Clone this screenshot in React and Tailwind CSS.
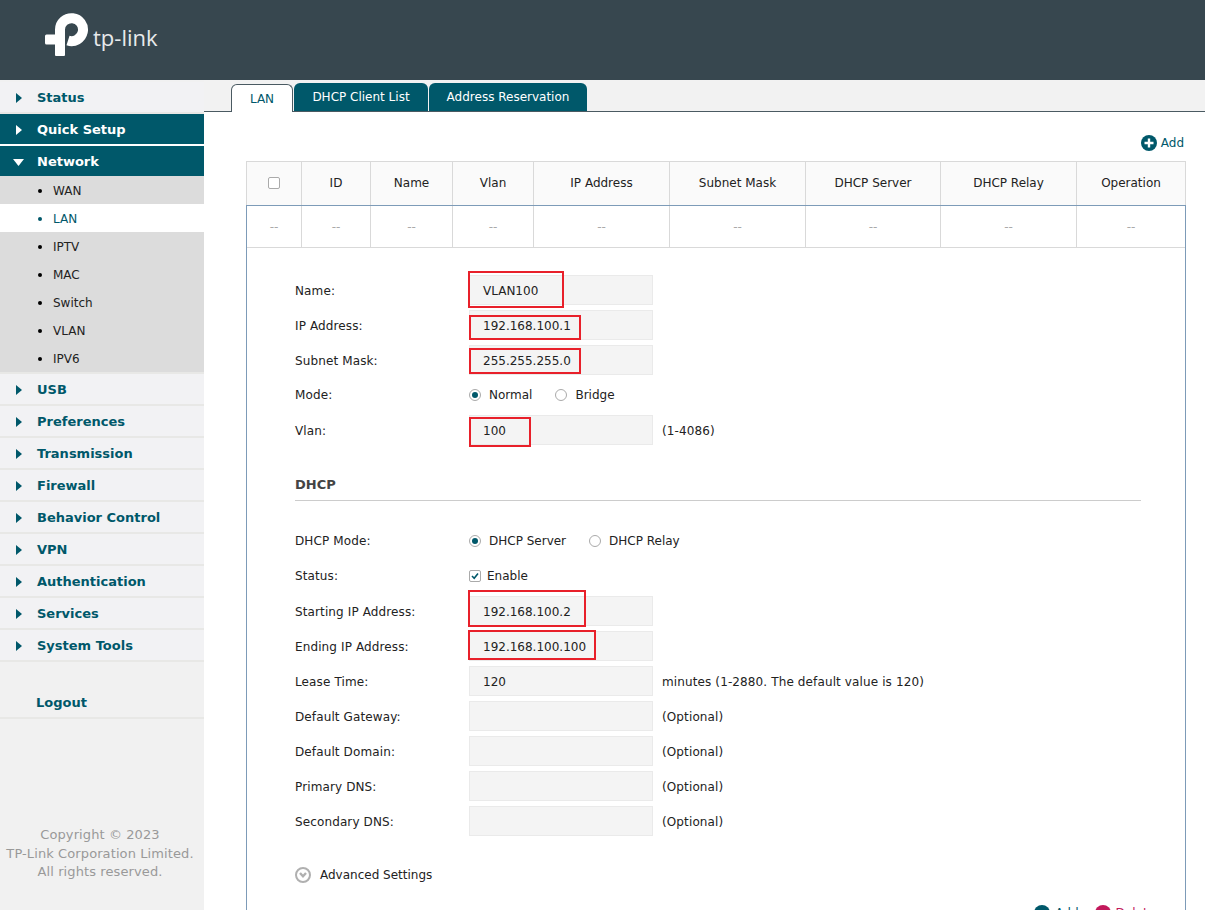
const menu = ['USB', 'Preferences', 'Transmission', 'Firewall', 'Behavior Control', 'VPN', 'Authentication', 'Services', 'System Tools']
const subMenu = ['WAN', 'LAN', 'IPTV', 'MAC', 'Switch', 'VLAN', 'IPV6']
const columns = [
    { name: 'ID', w: 'w-[69px]' },
    { name: 'Name', w: 'w-[82px]' },
    { name: 'Vlan', w: 'w-[81px]' },
    { name: 'IP Address', w: 'w-[136px]' },
    { name: 'Subnet Mask', w: 'w-[136px]' },
    { name: 'DHCP Server', w: 'w-[135px]' },
    { name: 'DHCP Relay', w: 'w-[136px]' },
    { name: 'Operation', w: 'flex-1' },
]

function Arrow({ white }) {
    return (
        <svg width="6" height="10" viewBox="0 0 6 10" className={`ml-4 mr-[15px] ${white ? 'fill-white' : 'fill-[#00586a]'}`}>
            <path d="M0 0 L6 5 L0 10 Z" />
        </svg>
    )
}

function MenuRow({ label }) {
    return (
        <div className="h-8 pt-0.5 flex items-center bg-[#f2f2f4] border-b-2 border-[#e8e8e6] text-[#00586a] font-bold text-[13px]">
            <Arrow />
            <span>{label}</span>
        </div>
    )
}

function Sidebar() {
    return (
        <aside className="w-[204px] shrink-0 bg-[#f1f1f1] flex flex-col pt-0.5">
            <MenuRow label="Status" />
            <div className="h-[30px] pt-0.5 flex items-center bg-[#00586a] text-white font-bold text-[13px]">
                <Arrow white />
                <span>Quick Setup</span>
            </div>
            <div className="h-0.5 bg-white" />
            <div className="h-[30px] pt-0.5 flex items-center bg-[#00586a] text-white font-bold text-[13px]">
                <svg width="11" height="7" viewBox="0 0 11 7" className="ml-[13px] mr-[13px] fill-white">
                    <path d="M0 0 H11 L5.5 7 Z" />
                </svg>
                <span>Network</span>
            </div>
            <div className="bg-[#dcdcdc] border-b-2 border-[#e8e8e6]">
                {subMenu.map((item) => (
                    <div
                        key={item}
                        className={`h-7 pt-0.5 flex items-center text-xs ${item === 'LAN' ? 'bg-white text-[#00586a]' : 'text-[#222]'}`}
                    >
                        <span className={`ml-[38px] mr-[11px] w-1 h-1 rounded-full ${item === 'LAN' ? 'bg-[#00586a]' : 'bg-black'}`} />
                        {item}
                    </div>
                ))}
            </div>
            {menu.map((item) => (
                <MenuRow key={item} label={item} />
            ))}
            <div className="mt-[25px] h-[32px] pt-0.5 flex items-center pl-[36px] border-b-2 border-[#e8e8e6] text-[#00586a] font-bold text-[13px]">
                Logout
            </div>
            <div className="mt-[107px] pr-1 text-center text-[#999] text-[13px] leading-[18.5px] tracking-[0.1px]">
                <div>Copyright © 2023</div>
                <div>TP-Link Corporation Limited.</div>
                <div>All rights reserved.</div>
            </div>
        </aside>
    )
}

function Field({ label, value, hint, mark }) {
    return (
        <div className="h-[35px] pt-0.5 pb-[3px] flex items-center">
            <div className="w-[174px] pt-0.5 text-[#222] tracking-[0.12px]">{label}</div>
            <div className="relative w-[184px] h-[30px] pt-0.5 bg-[#f4f4f4] border border-[#eaeaea] pl-[13px] flex items-center text-[#222]">
                {value}
                {mark}
            </div>
            {hint && <div className="ml-[9px] pt-0.5 text-[#222] tracking-[0.12px]">{hint}</div>}
        </div>
    )
}

function Radio({ label, checked, gap }) {
    return (
        <label className={`flex items-center ${gap}`}>
            <span className="w-3 h-3 rounded-full border border-[#aaa] flex items-center justify-center mr-2 bg-white">
                {checked && <span className="w-1.5 h-1.5 rounded-full bg-[#00586a]" />}
            </span>
            {label}
        </label>
    )
}

function Row({ label, children, className = 'pt-0.5 pb-[3px]' }) {
    return (
        <div className={`h-[35px] flex items-center text-[#222] ${className}`}>
            <div className="w-[174px] tracking-[0.12px]">{label}</div>
            {children}
        </div>
    )
}

export default function App() {
    return (
        <div className="h-[910px] overflow-hidden flex flex-col bg-white font-['DejaVu_Sans',sans-serif] text-xs">
            {/* Header */}
            <header className="h-20 shrink-0 bg-[#37474f] flex items-start">
                <svg width="44" height="44" viewBox="45 13 44 44" className="ml-[45px] mt-[13px] fill-white stroke-white">
                    <path d="M45 36 Q45 34.5 46.5 34.5 H65 V55 Q65 56 64 56 H56 Q55 56 55 55 V44.5 H46.5 Q45 44.5 45 43 Z" stroke="none" />
                    <path d="M60 36 V29.5 A11.5 11.5 0 1 1 68 40.6" fill="none" strokeWidth="10" />
                </svg>
                <span className="ml-[4px] mt-[20px] text-[22px] leading-[34px] text-[#e8eaeb] font-['Open_Sans',sans-serif]">tp-link</span>
            </header>

            <div className="flex flex-1 min-h-0">
                <Sidebar />

                <main className="flex-1 min-w-0">
                    {/* Tabs */}
                    <div className="h-8 bg-[#f2f2f2] border-b border-[#4a5a62] flex items-end pl-[27px]">
                        <div className="w-[62px] h-7 -mb-px bg-white border border-b-0 border-[#4a5a62] rounded-t-md flex items-center justify-center text-[#00586a]">LAN</div>
                        <div className="ml-px w-[134px] h-7 bg-[#00586a] rounded-t-md flex items-center justify-center text-white">DHCP Client List</div>
                        <div className="ml-px w-[158px] h-7 bg-[#00586a] rounded-t-md flex items-center justify-center text-white">Address Reservation</div>
                    </div>

                    <div className="pl-[42px] pr-[19px]">
                        <div className="h-[49px] flex items-center justify-end pt-[12px] pr-0.5 text-[#00586a]">
                            <svg width="16" height="16" viewBox="0 0 16 16" className="mr-[4px]">
                                <circle cx="8" cy="8" r="8" fill="#00586a" />
                                <path d="M8 3.5 V12.5 M3.5 8 H12.5" stroke="#fff" strokeWidth="2.4" />
                            </svg>
                            Add
                        </div>

                        {/* Table */}
                        <div className="flex h-[44px] bg-[#fafafa] border border-[#d9d9d9] border-b-0 text-[#222]">
                            <div className="w-[54px] flex items-center justify-center pb-0.5">
                                <span className="w-3 h-3 rounded-[2px] border border-[#aaa] bg-white" />
                            </div>
                            {columns.map((c) => (
                                <div key={c.name} className={`${c.w} border-l border-[#d9d9d9] flex items-center justify-center pb-0.5`}>{c.name}</div>
                            ))}
                        </div>
                        <div className="border border-t-[#7d9bb8] border-x-[#7d9bb8] border-b-0">
                            <div className="flex h-[42px] border-b border-[#d9d9d9] text-[#aaa]">
                                <div className="w-[54px] flex items-center justify-center pt-px">--</div>
                                {columns.map((c) => (
                                    <div key={c.name} className={`${c.w} border-l border-[#d9d9d9] flex items-center justify-center pt-px`}>--</div>
                                ))}
                            </div>

                            {/* Form */}
                            <div className="pl-[48px] pr-[44px] pt-[25px] pb-10">
                                <Field label="Name:" value="VLAN100" mark={<span className="absolute -left-[2px] -top-[5px] w-[96px] h-[37px] border-2 border-[#e8202a]" />} />
                                <Field label="IP Address:" value="192.168.100.1" mark={<span className="absolute -left-px top-[4px] w-[112px] h-[25px] border-2 border-[#e8202a]" />} />
                                <Field label="Subnet Mask:" value="255.255.255.0" mark={<span className="absolute -left-px top-[2px] w-[112px] h-[26px] border-2 border-[#e8202a]" />} />
                                <Row label="Mode:">
                                    <Radio label="Normal" checked gap="mr-[23px]" />
                                    <Radio label="Bridge" />
                                </Row>
                                <Field label="Vlan:" value="100" hint="(1-4086)" mark={<span className="absolute -left-px top-px w-[62px] h-[30px] border-2 border-[#e8202a]" />} />

                                <div className="mt-[27px] pb-[6px] border-b border-[#ccc] font-bold text-[13px] text-[#444] leading-[19px]">DHCP</div>
                                <div className="h-[22px]" />

                                <Row label="DHCP Mode:" className="pt-[3px] pb-0.5">
                                    <Radio label="DHCP Server" checked gap="mr-[23px]" />
                                    <Radio label="DHCP Relay" />
                                </Row>
                                <Row label="Status:" className="pt-[3px] pb-0.5 mb-px">
                                    <span className="w-3 h-3 rounded-[2px] border border-[#aaa] mr-[6px] flex items-center justify-center">
                                        <svg width="8" height="8" viewBox="0 0 8 8"><path d="M1 4 L3.2 6.2 L7 1.5" fill="none" stroke="#00586a" strokeWidth="1.6" /></svg>
                                    </span>
                                    Enable
                                </Row>
                                <Field label="Starting IP Address:" value="192.168.100.2" mark={<span className="absolute -left-[2px] -top-[7px] w-[118px] h-[37px] border-2 border-[#e8202a]" />} />
                                <Field label="Ending IP Address:" value="192.168.100.100" mark={<span className="absolute -left-[2px] -top-[2px] w-[128px] h-[30px] border-2 border-[#e8202a]" />} />
                                <Field label="Lease Time:" value="120" hint="minutes (1-2880. The default value is 120)" />
                                <Field label="Default Gateway:" hint="(Optional)" />
                                <Field label="Default Domain:" hint="(Optional)" />
                                <Field label="Primary DNS:" hint="(Optional)" />
                                <Field label="Secondary DNS:" hint="(Optional)" />

                                <div className="mt-[18px] h-[35px] flex items-center text-[#222]">
                                    <span className="w-4 h-4 rounded-full border-2 border-[#b0b0b0] flex items-center justify-center mr-[9px]">
                                        <svg width="8" height="6" viewBox="0 0 8 6"><path d="M1 1 L4 4.2 L7 1" fill="none" stroke="#b0b0b0" strokeWidth="2.4" /></svg>
                                    </span>
                                    Advanced Settings
                                </div>

                                <div className="flex justify-end mt-[13px] -mr-[14px] gap-4">
                                    <span className="flex items-center text-[#00586a]">
                                        <span className="w-4 h-4 rounded-full bg-[#00586a] mr-[5px]" />Add
                                    </span>
                                    <span className="flex items-center text-[#c2185b]">
                                        <span className="w-4 h-4 rounded-full bg-[#c2185b] mr-[5px]" />Delete
                                    </span>
                                </div>
                            </div>
                        </div>
                    </div>
                </main>
            </div>
        </div>
    )
}
